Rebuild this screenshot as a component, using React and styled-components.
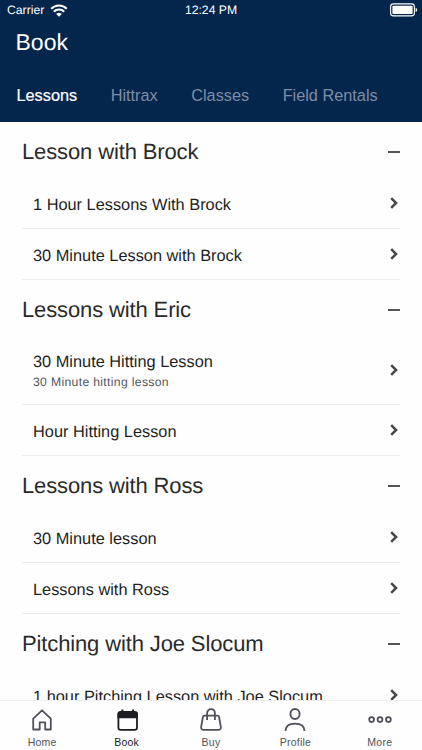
import { useState } from 'react';
import styled, { createGlobalStyle } from 'styled-components';

const tabs = ['Lessons', 'Hittrax', 'Classes', 'Field Rentals'];

const sections = [
  {
    title: 'Lesson with Brock',
    items: [{ name: '1 Hour Lessons With Brock' }, { name: '30 Minute Lesson with Brock' }],
  },
  {
    title: 'Lessons with Eric',
    items: [
      { name: '30 Minute Hitting Lesson', note: '30 Minute hitting lesson' },
      { name: 'Hour Hitting Lesson' },
    ],
  },
  {
    title: 'Lessons with Ross',
    items: [{ name: '30 Minute lesson' }, { name: 'Lessons with Ross' }],
  },
  {
    title: 'Pitching with Joe Slocum',
    items: [{ name: '1 hour Pitching Lesson with Joe Slocum' }],
  },
];

const navItems = [
  { label: 'Home', Icon: HomeIcon },
  { label: 'Book', Icon: BookIcon },
  { label: 'Buy', Icon: BuyIcon },
  { label: 'Profile', Icon: ProfileIcon },
  { label: 'More', Icon: MoreIcon },
];

function WifiIcon() {
  return (
    <svg width="18" height="13" viewBox="0 0 18 13" fill="none" stroke="#fff" strokeWidth="2.1">
      <path d="M1.2 4.8a11 11 0 0 1 15.6 0" />
      <path d="M3.8 7.7a7.3 7.3 0 0 1 10.4 0" />
      <path d="M9 12.8 6.2 10a4 4 0 0 1 5.6 0Z" fill="#fff" stroke="none" />
    </svg>
  );
}

function BatteryIcon() {
  return (
    <svg width="28" height="14" viewBox="0 0 28 14">
      <rect x="0.6" y="0.9" width="23.8" height="12" rx="2.8" fill="none" stroke="#fff" strokeWidth="1.1" />
      <rect x="2.4" y="2.7" width="20.2" height="8.4" rx="1" fill="#fff" />
      <path d="M25.6 4.7c2 .7 2 3.7 0 4.4Z" fill="#fff" />
    </svg>
  );
}

function Chevron() {
  return (
    <svg width="8" height="12" viewBox="0 0 8 12" fill="none" stroke="#484848" strokeWidth="2.5">
      <path d="M1.2 1.1 6.1 6l-4.9 4.9" />
    </svg>
  );
}

function HomeIcon() {
  return (
    <svg width="24" height="24" viewBox="0 0 24 24" fill="none" stroke="currentColor" strokeWidth="1.8" strokeLinejoin="round">
      <path d="M3.2 10.6 12 2.3l8.8 8.3v10.9h-5.6v-7.2H9.7v7.2H3.2Z" />
    </svg>
  );
}

function BookIcon() {
  return (
    <svg width="24" height="24" viewBox="0 0 24 24" fill="none" stroke="currentColor" strokeWidth="1.8">
      <rect x="3.4" y="4" width="18.6" height="17.8" rx="2.4" />
      <path d="M2.5 6c0-1.6.9-2.5 2.5-2.5h15.4c1.6 0 2.5.9 2.5 2.5v4.3H2.5Z" fill="currentColor" stroke="none" />
      <path d="M7.4 1.6v3M18 1.6v3" strokeWidth="2" />
    </svg>
  );
}

function BuyIcon() {
  return (
    <svg width="24" height="24" viewBox="0 0 24 24" fill="none" stroke="currentColor" strokeWidth="1.8" strokeLinejoin="round">
      <path d="M5.7 7.6h12.6c1.1 0 1.6.5 1.8 1.4l1.7 9.6c.4 2-.6 3.2-2.4 3.2H4.6c-1.8 0-2.8-1.2-2.4-3.2L3.9 9c.2-.9.7-1.4 1.8-1.4Z" />
      <path d="M8.1 12V5.3C8.1 2.8 9.7 1.2 12 1.2s3.9 1.6 3.9 4.1V12" />
    </svg>
  );
}

function ProfileIcon() {
  return (
    <svg width="24" height="24" viewBox="0 0 24 24" fill="none" stroke="currentColor" strokeWidth="1.9">
      <ellipse cx="12" cy="6" rx="4.6" ry="5" />
      <path d="M2.4 22.9c.3-5.5 3.6-7.3 9.6-7.3s9.3 1.8 9.6 7.3" />
    </svg>
  );
}

function MoreIcon() {
  return (
    <svg width="24" height="24" viewBox="0 0 24 24" fill="none" stroke="currentColor" strokeWidth="1.8">
      <circle cx="3.6" cy="11.6" r="2.4" />
      <circle cx="12" cy="11.6" r="2.4" />
      <circle cx="20.4" cy="11.6" r="2.4" />
    </svg>
  );
}

const App = () => {
  const [activeTab, setActiveTab] = useState('Lessons');
  const [activeNav, setActiveNav] = useState('Book');

  return (
    <Screen>
      <GlobalStyle />
      <Header>
        <StatusBar>
          <Carrier>
            Carrier
            <WifiIcon />
          </Carrier>
          <Clock>12:24 PM</Clock>
          <Battery>
            <BatteryIcon />
          </Battery>
        </StatusBar>
        <Title>Book</Title>
        <Tabs>
          {tabs.map((tab) => (
            <Tab key={tab} $active={tab === activeTab} onClick={() => setActiveTab(tab)}>
              {tab}
            </Tab>
          ))}
        </Tabs>
      </Header>

      <Content>
        {sections.map((section) => (
          <section key={section.title}>
            <SectionHeader>
              <SectionTitle>{section.title}</SectionTitle>
              <Minus />
            </SectionHeader>
            {section.items.map((item) => (
              <Row key={item.name} $tall={Boolean(item.note)}>
                <RowText>
                  <Name>{item.name}</Name>
                  {item.note && <Note>{item.note}</Note>}
                </RowText>
                <Chevron />
              </Row>
            ))}
          </section>
        ))}
      </Content>

      <BottomNav>
        {navItems.map(({ label, Icon }) => (
          <NavButton key={label} $active={label === activeNav} onClick={() => setActiveNav(label)}>
            <Icon />
            <span>{label}</span>
          </NavButton>
        ))}
      </BottomNav>
    </Screen>
  );
};

const GlobalStyle = createGlobalStyle`
  * {
    box-sizing: border-box;
  }
  body {
    margin: 0;
    overflow: hidden;
    font-family: 'Liberation Sans', Arial, sans-serif;
    text-rendering: geometricPrecision;
  }
  button {
    border: 0;
    padding: 0;
    background: none;
    font-family: inherit;
  }
  svg {
    display: block;
    flex-shrink: 0;
  }
`;

const Screen = styled.div`
  display: flex;
  flex-direction: column;
  width: 422px;
  height: 750px;
  overflow: hidden;
  background: #fefefe;
`;

const Header = styled.header`
  flex: 0 0 122px;
  background: #04254c;
  color: #fff;
`;

const StatusBar = styled.div`
  display: grid;
  grid-template-columns: 1fr auto 1fr;
  align-items: center;
  height: 20px;
  padding: 0 4px 0 7px;
  font-size: 12.2px;
`;

const Carrier = styled.div`
  display: flex;
  align-items: center;
  gap: 6px;
`;

const Clock = styled.div`
  margin-top: -1px;
  padding-right: 3px;
`;

const Battery = styled.div`
  display: flex;
  justify-content: flex-end;
`;

const Title = styled.h1`
  margin: 0;
  padding: 8px 15.5px 0;
  font-size: 23px;
  line-height: 28px;
  font-weight: 400;
`;

const Tabs = styled.nav`
  display: flex;
  gap: 33.5px;
  padding: 28px 16.5px 0;
`;

const Tab = styled.button`
  color: ${({ $active }) => ($active ? '#fff' : '#7c8da6')};
  font-size: 16.3px;
  line-height: 22px;
  -webkit-text-stroke: ${({ $active }) => ($active ? '0.2px' : '0')};
`;

const Content = styled.main`
  flex: 1;
  min-height: 0;
  overflow: hidden;
  padding: 0 22px;
`;

const SectionHeader = styled.div`
  display: flex;
  align-items: center;
  justify-content: space-between;
  height: 56px;
  padding-top: 3px;
`;

const SectionTitle = styled.h2`
  margin: 0;
  font-size: 22px;
  line-height: 28px;
  letter-spacing: -0.13px;
  font-weight: 400;
  color: #2a2a2a;
`;

const Minus = styled.span`
  width: 12px;
  height: 2px;
  background: #555;
`;

const Row = styled.div`
  display: flex;
  align-items: center;
  justify-content: space-between;
  height: ${({ $tall }) => ($tall ? '69px' : '51px')};
  padding: 0 2px 0 11px;
  border-bottom: 1px solid #ededed;
`;

const RowText = styled.div`
  padding-top: 3px;
`;

const Name = styled.div`
  font-size: 16.35px;
  line-height: 20px;
  color: #1e1e1e;
`;

const Note = styled.div`
  font-size: 12.2px;
  line-height: 20px;
  letter-spacing: 0.33px;
  color: #55565c;
`;

const BottomNav = styled.nav`
  display: grid;
  grid-template-columns: repeat(5, 1fr);
  flex: 0 0 50px;
  background: #fefefe;
  border-top: 1px solid #f0f0f0;
`;

const NavButton = styled.button`
  display: flex;
  flex-direction: column;
  align-items: center;
  gap: 4px;
  padding-top: 7px;
  color: ${({ $active }) => ($active ? '#1c1c22' : '#50515b')};
  font-size: 10.5px;
  line-height: 13px;
  letter-spacing: 0.25px;
`;

export default App;
